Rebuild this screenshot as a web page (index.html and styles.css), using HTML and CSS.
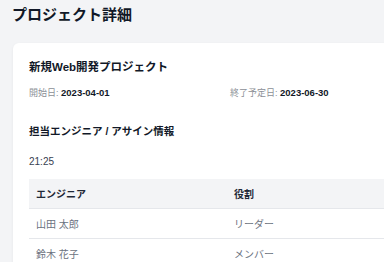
FILE: index.html
```html
<!DOCTYPE html>
<html lang="ja">
  <head>
    <meta charset="UTF-8" />
    <title>プロジェクト詳細</title>
    <link rel="stylesheet" href="styles.css">
  </head>
  <body>
    <div class="page">
      <h1>プロジェクト詳細</h1>

      <div class="card">
        <h2>新規Web開発プロジェクト</h2>
        <div class="dates">
          <div><span class="label">開始日:</span> <strong>2023-04-01</strong></div>
          <div><span class="label">終了予定日:</span> <strong>2023-06-30</strong></div>
        </div>

        <h3>担当エンジニア / アサイン情報</h3>
        <p class="time">21:25</p>

        <table class="assign-table">
          <thead>
            <tr>
              <th class="col-name">エンジニア</th>
              <th>役割</th>
            </tr>
          </thead>
          <tbody>
            <tr>
              <td>山田 太郎</td>
              <td>リーダー</td>
            </tr>
            <tr>
              <td>鈴木 花子</td>
              <td>メンバー</td>
            </tr>
          </tbody>
        </table>
      </div>
    </div>
  </body>
</html>
```

FILE: styles.css
```css
/* General Styles */
html,
body {
  overflow: hidden;
}

body {
  font-family: "Liberation Sans", "Noto Sans CJK JP", sans-serif;
  background: #f3f4f6;
  color: #1f2937;
  margin: 0;
}

.page {
  padding: 4px 13px 0;
}

h1 {
  margin: 0 0 0 -1px;
  font-size: 15px;
  line-height: 22px;
  font-weight: bold;
  color: #111827;
}

.card {
  margin-top: 17px;
  width: 386px;
  background: #fff;
  padding: 16px;
  border-radius: 6px;
  box-shadow: 0 1px 3px rgba(0, 0, 0, 0.06);
}

h2 {
  margin: 0;
  font-size: 11.5px;
  line-height: 16px;
  color: #111827;
}

/* Dates */
.dates {
  margin-top: 11px;
  display: grid;
  grid-template-columns: 1fr 1fr;
  gap: 16px;
  font-size: 9px;
  line-height: 14px;
}

.dates .label {
  color: #8b8f96;
}

.dates strong {
  color: #111827;
  font-size: 9.5px;
}

h3 {
  margin: 23px 0 0;
  font-size: 10.5px;
  line-height: 16px;
  color: #111827;
}

.time {
  margin: 15px 0 0;
  font-size: 10px;
  line-height: 15px;
  color: #374151;
}

/* Table */
.assign-table {
  margin-top: 10px;
  width: 100%;
  border-collapse: collapse;
  font-size: 10px;
}

.assign-table th,
.assign-table td {
  text-align: left;
  padding: 0 7px;
  height: 29px;
  border-bottom: 1px solid #e5e7eb;
}

.assign-table th {
  background: #f3f4f6;
  font-weight: bold;
  color: #1f2937;
}

.assign-table td {
  color: #6b7280;
}

.col-name {
  width: 184px;
}
```
